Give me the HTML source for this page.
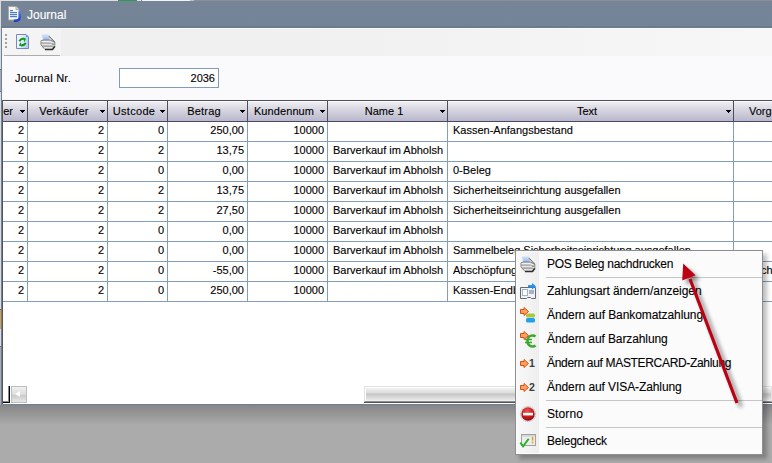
<!DOCTYPE html><html><head><meta charset="utf-8"><style>
*{margin:0;padding:0;box-sizing:border-box}
html,body{width:772px;height:463px;overflow:hidden}
body{position:relative;background:#ababab;font-family:"Liberation Sans",sans-serif;color:#000}
.ab{position:absolute}
.t{position:absolute;white-space:pre;font-size:11px;line-height:13px;-webkit-text-stroke:0.12px currentColor}
.r{text-align:right}
.hd{position:absolute;top:101px;height:20px;background:linear-gradient(#fdfdfe 0px,#fdfdfe 1px,#ededf1 1px,#d6d5e0 45%,#b9b7cc 100%)}
.tri{position:absolute;width:0;height:0;border-left:3px solid transparent;border-right:3px solid transparent;border-top:3px solid #000}
.mi{position:absolute;left:547px;font-size:12px;line-height:14px;white-space:pre;color:#000;-webkit-text-stroke:0.1px currentColor}

</style></head><body>
<div class="ab" style="left:0;top:405px;width:772px;height:20px;background:linear-gradient(#868686,#ababab)"></div>
<div class="ab" style="left:0px;top:0;width:118px;height:1px;background:#dedede"></div>
<div class="ab" style="left:118px;top:0;width:19px;height:1px;background:#2d9c4a"></div>
<div class="ab" style="left:137px;top:0;width:4px;height:1px;background:#e6e6e6"></div>
<div class="ab" style="left:141px;top:0;width:1px;height:1px;background:#5b7db5"></div>
<div class="ab" style="left:142px;top:0;width:48px;height:1px;background:#f2f2f2"></div>
<div class="ab" style="left:190px;top:0;width:4px;height:1px;background:#b8c2d4"></div>
<div class="ab" style="left:194px;top:0;width:578px;height:1px;background:#8e8e8e"></div>
<div class="ab" style="left:0;top:1px;width:2px;height:68px;background:#d9d9d9"></div>
<div class="ab" style="left:0;top:69px;width:2px;height:1px;background:#707070"></div>
<div class="ab" style="left:0;top:70px;width:2px;height:21px;background:#aaa6ba"></div>
<div class="ab" style="left:0;top:91px;width:2px;height:1px;background:#707070"></div>
<div class="ab" style="left:0;top:92px;width:2px;height:217px;background:#dcdcdc"></div>
<div class="ab" style="left:0;top:309px;width:2px;height:1px;background:#806020"></div>
<div class="ab" style="left:0;top:310px;width:2px;height:19px;background:#dca238"></div>
<div class="ab" style="left:0;top:329px;width:2px;height:17px;background:#dcdcdc"></div>
<div class="ab" style="left:0;top:346px;width:2px;height:1px;background:#707070"></div>
<div class="ab" style="left:0;top:347px;width:2px;height:58px;background:#a9a9b0"></div>
<div class="ab" style="left:1px;top:1px;width:771px;height:404px;background:#71809a"></div>
<div class="ab" style="left:1px;top:1px;width:771px;height:27px;background:linear-gradient(#758497,#748396 92%,#6d7b90 92%)"></div>
<div class="ab" style="left:2px;top:28px;width:770px;height:376px;background:#fff"></div>
<div class="ab" style="left:2px;top:28px;width:770px;height:28px;background:linear-gradient(90deg,#efefef 0px,#f0f0f0 300px,#f7f7f7 770px)"></div>
<div class="ab" style="left:2px;top:28px;width:59px;height:27px;background:#f4f4f4"></div>
<div class="ab" style="left:2px;top:28px;width:770px;height:1px;background:#fafafa"></div>
<div class="ab" style="left:4px;top:55px;width:56px;height:1px;background:#adadad"></div>
<div class="ab" style="left:2px;top:56px;width:59px;height:1px;background:#fdfdfd"></div>
<div class="ab" style="left:5px;top:34px;width:2px;height:2px;background:#a0a0a0"></div>
<div class="ab" style="left:5px;top:38px;width:2px;height:2px;background:#a0a0a0"></div>
<div class="ab" style="left:5px;top:42px;width:2px;height:2px;background:#a0a0a0"></div>
<div class="ab" style="left:5px;top:46px;width:2px;height:2px;background:#a0a0a0"></div>
<div class="ab" style="left:2px;top:56px;width:770px;height:44px;background:#fafafd"></div>
<div class="t" style="left:27px;top:8px;font-size:12px;line-height:14px;color:#fff">Journal</div>
<svg class="ab" style="left:0;top:0" width="26" height="26" viewBox="0 0 26 26">
<path d="M8.5 6.5h7.5l3 3v10.5h-10.5z" fill="#f6f6f6" stroke="#a8a8a8" stroke-width="1"/>
<path d="M16 6.5v3h3" fill="#d8d8d8" stroke="#a8a8a8" stroke-width="1"/>
<rect x="10" y="10" width="3" height="1.2" fill="#4a7cc4"/>
<rect x="10" y="12" width="7" height="1.2" fill="#4a7cc4"/>
<rect x="10" y="14" width="7" height="1.2" fill="#4a7cc4"/>
<rect x="10" y="16" width="7" height="1.2" fill="#4a7cc4"/>
<defs><linearGradient id="jg" x1="0" y1="0" x2="0" y2="1"><stop offset="0" stop-color="#5a8af0"/><stop offset="1" stop-color="#1a3cc8"/></linearGradient></defs><path d="M19.8 11v5.5c0 2.8-1.6 4.2-4 4.2h-1.8" fill="none" stroke="url(#jg)" stroke-width="2.5"/>
</svg>
<svg class="ab" style="left:16px;top:34px" width="14" height="16" viewBox="0 0 14 16">
<defs><linearGradient id="dg" x1="0" y1="0" x2="1" y2="0.3"><stop offset="0" stop-color="#f6faff"/><stop offset="0.5" stop-color="#e4eefc"/><stop offset="1" stop-color="#b4cdf2"/></linearGradient></defs>
<path d="M0.5 0.5h9.5l2.5 2.5v11.5h-12z" fill="url(#dg)" stroke="#6a78c0" stroke-width="0.9"/>
<path d="M10 0.6l2.4 2.4h-2.4z" fill="#4a9ae8"/>
<path d="M3.3 7.2Q4.8 4.6 7.6 4.9" fill="none" stroke="#0b9b12" stroke-width="2"/>
<path d="M6.6 3.4L10 4.6L8.6 8z" fill="#0b9b12"/>
<path d="M9.7 9Q8.2 11.6 5.4 11.3" fill="none" stroke="#0b9b12" stroke-width="2"/>
<path d="M6.4 12.8L3 11.6L4.4 8.2z" fill="#0b9b12"/>
</svg>
<div class="t" style="left:15px;top:72px;color:#000;letter-spacing:0.25px">Journal Nr.</div>
<div class="ab" style="left:119px;top:68px;width:100px;height:20px;border:1px solid #7f9db9;background:#fff"></div>
<div class="t r" style="left:150px;top:72px;width:65px">2036</div>
<div class="ab" style="left:2px;top:100px;width:770px;height:1px;background:#4f4f55"></div>
<div class="ab" style="left:2px;top:121px;width:770px;height:1px;background:#4a4866"></div>
<div class="ab" style="left:2px;top:100px;width:1px;height:304px;background:#555"></div>
<div class="hd" style="left:3px;width:24px"></div>
<div class="ab" style="left:27px;top:101px;width:1px;height:20px;background:#4d4d5c"></div>
<div class="ab" style="left:28px;top:101px;width:1px;height:20px;background:#fff"></div>
<div class="ab" style="left:20px;top:110px;width:5px;height:1px;background:#000"></div>
<div class="ab" style="left:21px;top:111px;width:3px;height:1px;background:#000"></div>
<div class="ab" style="left:22px;top:112px;width:1px;height:1px;background:#000"></div>
<div class="hd" style="left:28px;width:79px"></div>
<div class="ab" style="left:107px;top:101px;width:1px;height:20px;background:#4d4d5c"></div>
<div class="ab" style="left:108px;top:101px;width:1px;height:20px;background:#fff"></div>
<div class="ab" style="left:100px;top:110px;width:5px;height:1px;background:#000"></div>
<div class="ab" style="left:101px;top:111px;width:3px;height:1px;background:#000"></div>
<div class="ab" style="left:102px;top:112px;width:1px;height:1px;background:#000"></div>
<div class="hd" style="left:108px;width:59px"></div>
<div class="ab" style="left:167px;top:101px;width:1px;height:20px;background:#4d4d5c"></div>
<div class="ab" style="left:168px;top:101px;width:1px;height:20px;background:#fff"></div>
<div class="ab" style="left:160px;top:110px;width:5px;height:1px;background:#000"></div>
<div class="ab" style="left:161px;top:111px;width:3px;height:1px;background:#000"></div>
<div class="ab" style="left:162px;top:112px;width:1px;height:1px;background:#000"></div>
<div class="hd" style="left:168px;width:79px"></div>
<div class="ab" style="left:247px;top:101px;width:1px;height:20px;background:#4d4d5c"></div>
<div class="ab" style="left:248px;top:101px;width:1px;height:20px;background:#fff"></div>
<div class="ab" style="left:240px;top:110px;width:5px;height:1px;background:#000"></div>
<div class="ab" style="left:241px;top:111px;width:3px;height:1px;background:#000"></div>
<div class="ab" style="left:242px;top:112px;width:1px;height:1px;background:#000"></div>
<div class="hd" style="left:248px;width:79px"></div>
<div class="ab" style="left:327px;top:101px;width:1px;height:20px;background:#4d4d5c"></div>
<div class="ab" style="left:328px;top:101px;width:1px;height:20px;background:#fff"></div>
<div class="ab" style="left:320px;top:110px;width:5px;height:1px;background:#000"></div>
<div class="ab" style="left:321px;top:111px;width:3px;height:1px;background:#000"></div>
<div class="ab" style="left:322px;top:112px;width:1px;height:1px;background:#000"></div>
<div class="hd" style="left:328px;width:119px"></div>
<div class="ab" style="left:447px;top:101px;width:1px;height:20px;background:#4d4d5c"></div>
<div class="ab" style="left:448px;top:101px;width:1px;height:20px;background:#fff"></div>
<div class="ab" style="left:440px;top:110px;width:5px;height:1px;background:#000"></div>
<div class="ab" style="left:441px;top:111px;width:3px;height:1px;background:#000"></div>
<div class="ab" style="left:442px;top:112px;width:1px;height:1px;background:#000"></div>
<div class="hd" style="left:448px;width:285px"></div>
<div class="ab" style="left:733px;top:101px;width:1px;height:20px;background:#4d4d5c"></div>
<div class="ab" style="left:734px;top:101px;width:1px;height:20px;background:#fff"></div>
<div class="ab" style="left:726px;top:110px;width:5px;height:1px;background:#000"></div>
<div class="ab" style="left:727px;top:111px;width:3px;height:1px;background:#000"></div>
<div class="ab" style="left:728px;top:112px;width:1px;height:1px;background:#000"></div>
<div class="hd" style="left:734px;width:38px"></div>
<div class="t r" style="left:3px;top:105px;width:10px;overflow:hidden">er</div>
<div class="t" style="left:28px;top:105px;width:72px;text-align:center;letter-spacing:0.25px">Verkäufer</div>
<div class="t" style="left:108px;top:105px;width:52px;text-align:center;letter-spacing:0.3px">Ustcode</div>
<div class="t" style="left:168px;top:105px;width:72px;text-align:center;letter-spacing:0.2px">Betrag</div>
<div class="t" style="left:248px;top:105px;width:72px;text-align:center;letter-spacing:0.1px">Kundennum</div>
<div class="t" style="left:328px;top:105px;width:112px;text-align:center;letter-spacing:0px">Name 1</div>
<div class="t" style="left:448px;top:105px;width:278px;text-align:center;letter-spacing:0px">Text</div>
<div class="t" style="left:749px;top:105px">Vorg</div>
<div class="ab" style="left:3px;top:141px;width:769px;height:1px;background:#819eba"></div>
<div class="t r" style="left:3px;top:124px;width:21px">2</div>
<div class="t r" style="left:28px;top:124px;width:76px">2</div>
<div class="t r" style="left:108px;top:124px;width:56px">0</div>
<div class="t r" style="left:168px;top:124px;width:76px">250,00</div>
<div class="t r" style="left:248px;top:124px;width:76px">10000</div>
<div class="t" style="left:453px;top:124px;width:280px;overflow:hidden">Kassen-Anfangsbestand</div>
<div class="ab" style="left:3px;top:161px;width:769px;height:1px;background:#819eba"></div>
<div class="t r" style="left:3px;top:144px;width:21px">2</div>
<div class="t r" style="left:28px;top:144px;width:76px">2</div>
<div class="t r" style="left:108px;top:144px;width:56px">2</div>
<div class="t r" style="left:168px;top:144px;width:76px">13,75</div>
<div class="t r" style="left:248px;top:144px;width:76px">10000</div>
<div class="t" style="left:333px;top:144px;width:114px;overflow:hidden">Barverkauf im Abholsh</div>
<div class="ab" style="left:3px;top:181px;width:769px;height:1px;background:#819eba"></div>
<div class="t r" style="left:3px;top:164px;width:21px">2</div>
<div class="t r" style="left:28px;top:164px;width:76px">2</div>
<div class="t r" style="left:108px;top:164px;width:56px">0</div>
<div class="t r" style="left:168px;top:164px;width:76px">0,00</div>
<div class="t r" style="left:248px;top:164px;width:76px">10000</div>
<div class="t" style="left:333px;top:164px;width:114px;overflow:hidden">Barverkauf im Abholsh</div>
<div class="t" style="left:453px;top:164px;width:280px;overflow:hidden">0-Beleg</div>
<div class="ab" style="left:3px;top:201px;width:769px;height:1px;background:#819eba"></div>
<div class="t r" style="left:3px;top:184px;width:21px">2</div>
<div class="t r" style="left:28px;top:184px;width:76px">2</div>
<div class="t r" style="left:108px;top:184px;width:56px">2</div>
<div class="t r" style="left:168px;top:184px;width:76px">13,75</div>
<div class="t r" style="left:248px;top:184px;width:76px">10000</div>
<div class="t" style="left:333px;top:184px;width:114px;overflow:hidden">Barverkauf im Abholsh</div>
<div class="t" style="left:453px;top:184px;width:280px;overflow:hidden">Sicherheitseinrichtung ausgefallen</div>
<div class="ab" style="left:3px;top:221px;width:769px;height:1px;background:#819eba"></div>
<div class="t r" style="left:3px;top:204px;width:21px">2</div>
<div class="t r" style="left:28px;top:204px;width:76px">2</div>
<div class="t r" style="left:108px;top:204px;width:56px">2</div>
<div class="t r" style="left:168px;top:204px;width:76px">27,50</div>
<div class="t r" style="left:248px;top:204px;width:76px">10000</div>
<div class="t" style="left:333px;top:204px;width:114px;overflow:hidden">Barverkauf im Abholsh</div>
<div class="t" style="left:453px;top:204px;width:280px;overflow:hidden">Sicherheitseinrichtung ausgefallen</div>
<div class="ab" style="left:3px;top:241px;width:769px;height:1px;background:#819eba"></div>
<div class="t r" style="left:3px;top:224px;width:21px">2</div>
<div class="t r" style="left:28px;top:224px;width:76px">2</div>
<div class="t r" style="left:108px;top:224px;width:56px">0</div>
<div class="t r" style="left:168px;top:224px;width:76px">0,00</div>
<div class="t r" style="left:248px;top:224px;width:76px">10000</div>
<div class="t" style="left:333px;top:224px;width:114px;overflow:hidden">Barverkauf im Abholsh</div>
<div class="ab" style="left:3px;top:261px;width:769px;height:1px;background:#819eba"></div>
<div class="t r" style="left:3px;top:244px;width:21px">2</div>
<div class="t r" style="left:28px;top:244px;width:76px">2</div>
<div class="t r" style="left:108px;top:244px;width:56px">0</div>
<div class="t r" style="left:168px;top:244px;width:76px">0,00</div>
<div class="t r" style="left:248px;top:244px;width:76px">10000</div>
<div class="t" style="left:333px;top:244px;width:114px;overflow:hidden">Barverkauf im Abholsh</div>
<div class="t" style="left:453px;top:244px;width:280px;overflow:hidden">Sammelbeleg Sicherheitseinrichtung ausgefallen</div>
<div class="ab" style="left:3px;top:281px;width:769px;height:1px;background:#819eba"></div>
<div class="t r" style="left:3px;top:264px;width:21px">2</div>
<div class="t r" style="left:28px;top:264px;width:76px">2</div>
<div class="t r" style="left:108px;top:264px;width:56px">0</div>
<div class="t r" style="left:168px;top:264px;width:76px">-55,00</div>
<div class="t r" style="left:248px;top:264px;width:76px">10000</div>
<div class="t" style="left:333px;top:264px;width:114px;overflow:hidden">Barverkauf im Abholsh</div>
<div class="t" style="left:453px;top:264px;width:280px;overflow:hidden">Abschöpfung Bankomat</div>
<div class="t" style="left:747px;top:264px">Rechnung</div>
<div class="ab" style="left:3px;top:301px;width:769px;height:1px;background:#819eba"></div>
<div class="t r" style="left:3px;top:284px;width:21px">2</div>
<div class="t r" style="left:28px;top:284px;width:76px">2</div>
<div class="t r" style="left:108px;top:284px;width:56px">0</div>
<div class="t r" style="left:168px;top:284px;width:76px">250,00</div>
<div class="t r" style="left:248px;top:284px;width:76px">10000</div>
<div class="t" style="left:453px;top:284px;width:280px;overflow:hidden">Kassen-Endbestand</div>
<div class="ab" style="left:27px;top:122px;width:1px;height:180px;background:#819eba"></div>
<div class="ab" style="left:107px;top:122px;width:1px;height:180px;background:#819eba"></div>
<div class="ab" style="left:167px;top:122px;width:1px;height:180px;background:#819eba"></div>
<div class="ab" style="left:247px;top:122px;width:1px;height:180px;background:#819eba"></div>
<div class="ab" style="left:327px;top:122px;width:1px;height:180px;background:#819eba"></div>
<div class="ab" style="left:447px;top:122px;width:1px;height:180px;background:#819eba"></div>
<div class="ab" style="left:733px;top:122px;width:1px;height:180px;background:#819eba"></div>
<div class="ab" style="left:8px;top:386px;width:1px;height:16px;background:#8a8a8a"></div>
<div class="ab" style="left:9px;top:386px;width:1px;height:17px;background:#000"></div>
<div class="ab" style="left:3px;top:401px;width:6px;height:1px;background:#8a8a8a"></div>
<div class="ab" style="left:3px;top:402px;width:7px;height:1px;background:#000"></div>
<div class="ab" style="left:11px;top:386px;width:16px;height:17px;border:1px solid #bdbdbd;background:linear-gradient(#f0f0f0,#dcdcdc 50%,#c8c8c8 52%,#e8e8e8)"></div>
<div class="ab" style="left:15px;top:391px;width:0;height:0;border-top:3.5px solid transparent;border-bottom:3.5px solid transparent;border-right:5px solid #fff"></div>
<div class="ab" style="left:364px;top:386px;width:408px;height:16px;border:1px solid #e2e2e2;border-bottom:1px solid #8e8e8e;box-shadow:inset 1px 1px 0 #fff;background:linear-gradient(#f6f6f6,#dedede 40%,#c6c6c6 50%,#e2e2e2 85%,#f2f2f2)"></div>
<div class="ab" style="left:364px;top:402px;width:408px;height:1px;background:#555"></div>
<div class="ab" style="left:2px;top:404px;width:770px;height:1px;background:#71809a"></div>
<div class="ab" style="left:519px;top:254px;width:248px;height:205px;background:rgba(0,0,0,0.25);filter:blur(2px)"></div>
<div class="ab" style="left:515px;top:250px;width:248px;height:205px;border:1px solid #8e8e8e;background:#fbfbfb"></div>
<div class="ab" style="left:517px;top:252px;width:22px;height:201px;background:linear-gradient(90deg,#f8f8f8,#eeeeee)"></div>
<div class="ab" style="left:546px;top:277px;width:216px;height:1px;background:#c6c6c6"></div>
<div class="ab" style="left:546px;top:400px;width:216px;height:1px;background:#c6c6c6"></div>
<div class="ab" style="left:546px;top:427px;width:216px;height:1px;background:#c6c6c6"></div>
<div class="mi" style="top:257px;letter-spacing:-0.25px">POS Beleg nachdrucken</div>
<div class="mi" style="top:284px;letter-spacing:-0.06px">Zahlungsart ändern/anzeigen</div>
<div class="mi" style="top:308px;letter-spacing:-0.08px">Ändern auf Bankomatzahlung</div>
<div class="mi" style="top:332px;letter-spacing:-0.1px">Ändern auf Barzahlung</div>
<div class="mi" style="top:356px;letter-spacing:-0.32px">Ändern auf MASTERCARD-Zahlung</div>
<div class="mi" style="top:380px;letter-spacing:-0.09px">Ändern auf VISA-Zahlung</div>
<div class="mi" style="top:407px;letter-spacing:0.1px">Storno</div>
<div class="mi" style="top:434px;letter-spacing:-0.22px">Belegcheck</div>
<svg class="ab" style="left:520px;top:256px" width="16" height="17" viewBox="0 0 16 17"><defs><linearGradient id="pg" x1="0" y1="0" x2="0" y2="1"><stop offset="0" stop-color="#d4e4fa"/><stop offset="1" stop-color="#8cb4ee"/></linearGradient>
<linearGradient id="bg2" x1="0" y1="0" x2="0" y2="1"><stop offset="0" stop-color="#d8d8d8"/><stop offset="0.6" stop-color="#b8b8b8"/><stop offset="1" stop-color="#e0e0e0"/></linearGradient></defs>
<path d="M2.3 1L8.8 1L9.7 6L3.5 6Z" fill="url(#pg)" stroke="#c0d0e8" stroke-width="0.6"/>
<path d="M9 2.2L14.6 8" stroke="#4a4a4a" stroke-width="1"/>
<path d="M1 6.8L3 6L10 6L14.8 8L14.8 12.5L12.5 15.5L5 15.5L1 11Z" fill="url(#bg2)" stroke="#6a6a6a" stroke-width="0.8"/>
<path d="M1.5 7.6L10 7.6L14 9.4" fill="none" stroke="#f8f8f8" stroke-width="0.9"/>
<path d="M1.5 9.2L10.5 9.2L14.5 10.6" fill="none" stroke="#a4a4a4" stroke-width="0.8"/>
<path d="M1.5 10.7L11 10.7L14.5 11.8" fill="none" stroke="#f4f4f4" stroke-width="0.9"/>
<path d="M2.5 12.3L11.5 12.3L14.5 12.2" fill="none" stroke="#969696" stroke-width="0.8"/>
<path d="M4 13.8L12 13.8" fill="none" stroke="#f0f0f0" stroke-width="0.9"/>
<path d="M5 15.4L12.5 15.4L14.8 12.5" fill="none" stroke="#2e2e2e" stroke-width="1.5"/>
<rect x="12.2" y="9.6" width="1.3" height="1.3" fill="#38b838"/></svg>
<svg class="ab" style="left:40px;top:34px" width="16" height="17" viewBox="0 0 16 17"><defs><linearGradient id="pgb" x1="0" y1="0" x2="0" y2="1"><stop offset="0" stop-color="#d4e4fa"/><stop offset="1" stop-color="#8cb4ee"/></linearGradient>
<linearGradient id="bg3" x1="0" y1="0" x2="0" y2="1"><stop offset="0" stop-color="#d8d8d8"/><stop offset="0.6" stop-color="#b8b8b8"/><stop offset="1" stop-color="#e0e0e0"/></linearGradient></defs>
<path d="M2.3 1L8.8 1L9.7 6L3.5 6Z" fill="url(#pgb)" stroke="#c0d0e8" stroke-width="0.6"/>
<path d="M9 2.2L14.6 8" stroke="#4a4a4a" stroke-width="1"/>
<path d="M1 6.8L3 6L10 6L14.8 8L14.8 12.5L12.5 15.5L5 15.5L1 11Z" fill="url(#bg3)" stroke="#6a6a6a" stroke-width="0.8"/>
<path d="M1.5 7.6L10 7.6L14 9.4" fill="none" stroke="#f8f8f8" stroke-width="0.9"/>
<path d="M1.5 9.2L10.5 9.2L14.5 10.6" fill="none" stroke="#a4a4a4" stroke-width="0.8"/>
<path d="M1.5 10.7L11 10.7L14.5 11.8" fill="none" stroke="#f4f4f4" stroke-width="0.9"/>
<path d="M2.5 12.3L11.5 12.3L14.5 12.2" fill="none" stroke="#969696" stroke-width="0.8"/>
<path d="M4 13.8L12 13.8" fill="none" stroke="#f0f0f0" stroke-width="0.9"/>
<path d="M5 15.4L12.5 15.4L14.8 12.5" fill="none" stroke="#2e2e2e" stroke-width="1.5"/>
<rect x="12.2" y="9.6" width="1.3" height="1.3" fill="#38b838"/></svg>
<svg class="ab" style="left:519px;top:282px" width="18" height="18" viewBox="0 0 18 18">
<path d="M1.5 5.5h15v11h-4l-1-1h-3l-1 1h-6z" fill="#eef2f6" stroke="#6a6a6a" stroke-width="1"/>
<rect x="3.5" y="7.5" width="5" height="6" fill="#fff" stroke="#9fb4cc" stroke-width="1"/>
<rect x="10" y="8" width="5" height="4" fill="#a8b4c4"/>
<path d="M9 4.2h5" stroke="#1e90f0" stroke-width="2.2"/>
<path d="M13 1l4 3.2l-4 3.4z" fill="#1e90f0"/>
</svg>
<svg class="ab" style="left:520px;top:307px" width="17" height="17" viewBox="0 0 17 17"><path d="M0.5 2.5h3.5v-2l4.5 4l-4.5 4v-2h-3.5z" fill="#ffa060" stroke="#d85010" stroke-width="1"/>
<rect x="6" y="6.5" width="9" height="4" rx="1.5" fill="#a8c840"/>
<rect x="6" y="11" width="9" height="4.5" rx="1.5" fill="#22a0ea"/></svg>
<svg class="ab" style="left:520px;top:331px" width="17" height="17" viewBox="0 0 17 17">
<path d="M15.5 5.5c-1-0.8-2-1-3-1c-3 0-5 2.5-5 5.5s2 5.5 5 5.5c1.2 0 2.2-0.3 3-1" fill="none" stroke="#3aa830" stroke-width="2.6"/>
<path d="M5 8.5h7M5 11.5h7" stroke="#3aa830" stroke-width="1.6"/>
<path d="M0.5 2.5h3.5v-2l4.5 4l-4.5 4v-2h-3.5z" fill="#ffa060" stroke="#d85010" stroke-width="1"/></svg>
<svg class="ab" style="left:520px;top:359px" width="9" height="9" viewBox="0 0 9 9"><path d="M0.5 2.5h3.5v-2l4.5 4l-4.5 4v-2h-3.5z" fill="#ffa060" stroke="#d85010" stroke-width="1"/></svg>
<div class="ab" style="left:529px;top:357px;font-size:10.5px;line-height:13px;font-weight:bold;color:#3c3c3c">1</div>
<svg class="ab" style="left:520px;top:383px" width="9" height="9" viewBox="0 0 9 9"><path d="M0.5 2.5h3.5v-2l4.5 4l-4.5 4v-2h-3.5z" fill="#ffa060" stroke="#d85010" stroke-width="1"/></svg>
<div class="ab" style="left:529px;top:381px;font-size:10.5px;line-height:13px;font-weight:bold;color:#3c3c3c">2</div>
<svg class="ab" style="left:519px;top:405px" width="18" height="18" viewBox="0 0 18 18">
<defs><radialGradient id="rg" cx="0.45" cy="0.3" r="0.75"><stop offset="0" stop-color="#ee5555"/><stop offset="0.6" stop-color="#c41a1a"/><stop offset="1" stop-color="#8a0008"/></radialGradient></defs>
<circle cx="9" cy="9" r="7.6" fill="#e6e6e6" stroke="#9a9a9a" stroke-width="0.7" stroke-dasharray="1 1"/>
<circle cx="9" cy="9" r="6.7" fill="url(#rg)"/>
<rect x="4" y="7.8" width="10" height="2.6" fill="#fff"/></svg>
<svg class="ab" style="left:519px;top:433px" width="18" height="16" viewBox="0 0 18 16">
<rect x="2.5" y="1.5" width="14" height="11" fill="#ececec" stroke="#a2a2a2" stroke-width="1"/>
<rect x="3" y="2" width="13" height="1.6" fill="#d4d4d4"/>
<rect x="12.8" y="4" width="1.6" height="3.6" fill="#f0a020"/><rect x="12.8" y="8.6" width="1.6" height="1.8" fill="#f0a020"/>
<path d="M1.3 9.6l2.8 3.8l5.6-7.6" fill="none" stroke="#28b028" stroke-width="1.9"/></svg>
<svg class="ab" style="left:0;top:0" width="772" height="463" viewBox="0 0 772 463">
<defs><filter id="bl" x="-50%" y="-50%" width="200%" height="200%"><feGaussianBlur stdDeviation="2"/></filter></defs>
<g opacity="0.45" filter="url(#bl)" transform="translate(4,4)">
<line x1="737" y1="403" x2="690" y2="279" stroke="#000" stroke-width="3.5"/>
<path d="M683.2 263.5L682.2 280.5L695.6 275.3z" fill="#000"/>
</g>
<line x1="737" y1="403" x2="690" y2="279" stroke="#bd0012" stroke-width="3.2"/>
<path d="M683.2 263.5L682.2 280.5L695.6 275.3z" fill="#bd0012"/>
</svg>
</body></html>
